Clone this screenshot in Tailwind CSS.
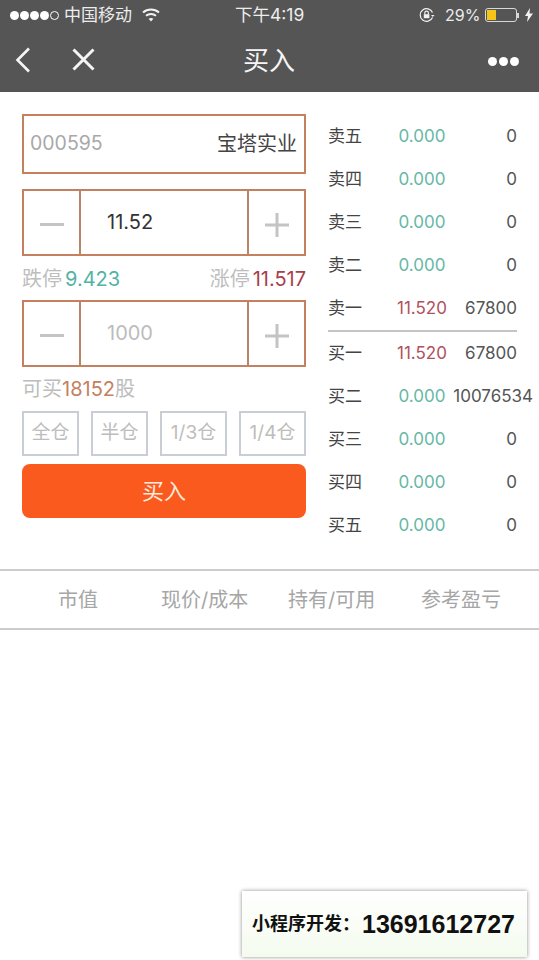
<!DOCTYPE html>
<html lang="zh-CN">
  <head>
    <meta charset="UTF-8" />
    <meta name="viewport" content="width=device-width, initial-scale=1.0" />
    <script src="https://cdn.jsdelivr.net/npm/@tailwindcss/browser@4"></script>
    <title>买入</title>
  </head>
  <body class="relative w-[539px] h-[960px] overflow-hidden bg-white font-['Inter','Noto_Sans_CJK_SC',sans-serif]">
    <header class="h-[92px] bg-[#555555] text-[#ececec]">
      <!-- status bar -->
      <div class="h-[30px] relative flex items-center pl-[10px] text-[17px] leading-none whitespace-nowrap">
        <div class="flex items-center gap-[1px]">
          <span class="w-[9px] h-[9px] rounded-full bg-white"></span>
          <span class="w-[9px] h-[9px] rounded-full bg-white"></span>
          <span class="w-[9px] h-[9px] rounded-full bg-white"></span>
          <span class="w-[9px] h-[9px] rounded-full bg-white"></span>
          <span class="w-[9px] h-[9px] rounded-full border border-white"></span>
        </div>
        <span class="ml-[5px] w-[68px]">中国移动</span>
        <svg class="ml-[10px] shrink-0" width="18" height="14" viewBox="0 0 18 14" fill="none" stroke="#f2f2f2" stroke-width="2">
          <path d="M1 4.500C5.500 .5 12.500 .5 17 4.500" />
          <path d="M4 7.800C6.800 5.400 11.200 5.400 14 7.800" />
          <path d="M9 13.500L6.600 10.800C8 9.800 10 9.800 11.400 10.800Z" fill="#f2f2f2" stroke="none" />
        </svg>
        <span class="ml-[75px] w-[71px] text-[17.500px]">下午4:19</span>
        <svg class="ml-[113px] shrink-0" width="16" height="16" viewBox="0 0 16 16" fill="none" stroke="#f2f2f2" stroke-width="1.200">
          <path d="M13.500 10.500A6.400 6.400 0 1 1 13.500 5.500" />
          <path d="M12 8h3.600l-1.800 2z" fill="#f2f2f2" stroke="none" />
          <rect x="4.800" y="7.200" width="5.600" height="4" fill="#f2f2f2" stroke="none" />
          <path d="M5.800 7.200V6a1.800 1.800 0 0 1 3.600 0v1.200" />
        </svg>
        <span class="ml-[10px] w-[34px] text-[16px]">29%</span>
        <div class="ml-[6px] w-[32px] h-[14px] border border-[#d8d8d8] rounded-[3px] p-[1px] shrink-0">
          <div class="w-[9px] h-full bg-[#f5c518]"></div>
        </div>
        <span class="w-[2px] h-[5px] bg-[#d8d8d8] shrink-0"></span>
        <svg class="ml-[6px] shrink-0" width="8" height="14" viewBox="0 0 8 14"><path d="M5 0L0 8h3l-1 6 6-8.500H4.500z" fill="#f2f2f2" /></svg>
      </div>
      <!-- nav bar -->
      <nav class="h-[62px] relative flex items-center justify-center">
        <svg class="absolute left-[15px] top-[17px]" width="16" height="26" viewBox="0 0 16 26" fill="none" stroke="#f5f5f5" stroke-width="2.600">
          <path d="M14 1.500L2.500 13 14 24.500" />
        </svg>
        <svg class="absolute left-[72px] top-[18px]" width="23" height="23" viewBox="0 0 23 23" fill="none" stroke="#f5f5f5" stroke-width="3">
          <path d="M1.500 1.500l20 20M21.500 1.500l-20 20" />
        </svg>
        <h1 class="text-[26px] leading-none text-[#f5f5f5] -mt-[1px] -ml-[1px]">买入</h1>
        <div class="absolute right-[20px] top-[27px] flex gap-[2px]">
          <span class="w-[9px] h-[9px] rounded-full bg-white"></span>
          <span class="w-[9px] h-[9px] rounded-full bg-white"></span>
          <span class="w-[9px] h-[9px] rounded-full bg-white"></span>
        </div>
      </nav>
    </header>

    <main class="flex h-[477px] pl-[22px]">
      <section class="w-[284px] pt-[22px] shrink-0">
        <div class="h-[60px] border-2 border-[#c5805f] flex items-center justify-between pl-[6px] pr-[7px] text-[20px]">
          <span class="text-[#a8a8a8] text-[19.500px]">000595</span>
          <span class="text-[#444444]">宝塔实业</span>
        </div>

        <div class="mt-[15px] h-[67px] border-2 border-[#c5805f] flex">
          <div class="w-[55px] flex items-center justify-center">
            <span class="w-[24px] h-[3px] bg-[#c4c4c4] mt-[3px]"></span>
          </div>
          <div class="flex-1 border-x-2 border-[#b98468] pl-[26px] pt-[17px] text-[20px] leading-[28px] text-[#333333]">11.52</div>
          <div class="w-[55px] flex items-center justify-center">
            <svg class="mt-[5px]" width="24" height="24" viewBox="0 0 24 24" fill="#c4c4c4"><path d="M10.500 0h3v10.500H24v3H13.500V24h-3V13.500H0v-3h10.500z" /></svg>
          </div>
        </div>

        <div class="h-[44px] flex items-center justify-between text-[20px] text-[#bdbdbd] pt-[1px] whitespace-nowrap">
          <span>跌停<span class="ml-[3px] text-[#4fb3a5]">9.423</span></span>
          <span>涨停<span class="ml-[3px] text-[#a83f4c]">11.517</span></span>
        </div>

        <div class="h-[67px] border-2 border-[#c5805f] flex">
          <div class="w-[55px] flex items-center justify-center">
            <span class="w-[24px] h-[3px] bg-[#c4c4c4] mt-[3px]"></span>
          </div>
          <div class="flex-1 border-x-2 border-[#b98468] pl-[26px] pt-[17px] text-[20px] leading-[28px] text-[#bcbcbc]">1000</div>
          <div class="w-[55px] flex items-center justify-center">
            <svg class="mt-[5px]" width="24" height="24" viewBox="0 0 24 24" fill="#c4c4c4"><path d="M10.500 0h3v10.500H24v3H13.500V24h-3V13.500H0v-3h10.500z" /></svg>
          </div>
        </div>

        <p class="h-[44px] flex items-center text-[20px] text-[#bdbdbd]">可买<span class="text-[#c5805f]">18152</span>股</p>

        <div class="flex justify-between text-[19px] text-[#bdbdbd] whitespace-nowrap">
          <button class="w-[57px] h-[45px] border-2 border-[#c9ced6]">全仓</button>
          <button class="w-[57px] h-[45px] border-2 border-[#c9ced6]">半仓</button>
          <button class="w-[67px] h-[45px] border-2 border-[#c9ced6]">1/3仓</button>
          <button class="w-[67px] h-[45px] border-2 border-[#c9ced6]">1/4仓</button>
        </div>

        <button class="mt-[8px] w-full h-[54px] rounded-[8px] bg-[#fb5a1f] text-[22px] text-[#fdeadf]">买入</button>
      </section>

      <section class="ml-[22px] w-[189px] shrink-0 pt-[23px] text-[17px] text-[#555555]">
        <div class="h-[43px] flex items-center"><span class="w-[66px] text-[#444444]">卖五</span><span class="w-[56px] text-center text-[#66b8a6]">0.000</span><span class="flex-1 text-right">0</span></div>
        <div class="h-[43px] flex items-center"><span class="w-[66px] text-[#444444]">卖四</span><span class="w-[56px] text-center text-[#66b8a6]">0.000</span><span class="flex-1 text-right">0</span></div>
        <div class="h-[43px] flex items-center"><span class="w-[66px] text-[#444444]">卖三</span><span class="w-[56px] text-center text-[#66b8a6]">0.000</span><span class="flex-1 text-right">0</span></div>
        <div class="h-[43px] flex items-center"><span class="w-[66px] text-[#444444]">卖二</span><span class="w-[56px] text-center text-[#66b8a6]">0.000</span><span class="flex-1 text-right">0</span></div>
        <div class="h-[43px] flex items-center"><span class="w-[66px] text-[#444444]">卖一</span><span class="w-[56px] text-center text-[#b0505c]">11.520</span><span class="flex-1 text-right">67800</span></div>
        <div class="h-[2px] bg-[#c4c4c4]"></div>
        <div class="h-[43px] flex items-center"><span class="w-[66px] text-[#444444]">买一</span><span class="w-[56px] text-center text-[#b0505c]">11.520</span><span class="flex-1 text-right">67800</span></div>
        <div class="h-[43px] flex items-center"><span class="w-[66px] text-[#444444]">买二</span><span class="w-[56px] text-center text-[#66b8a6]">0.000</span><span class="flex-1 text-right whitespace-nowrap -mr-[16px]">10076534</span></div>
        <div class="h-[43px] flex items-center"><span class="w-[66px] text-[#444444]">买三</span><span class="w-[56px] text-center text-[#66b8a6]">0.000</span><span class="flex-1 text-right">0</span></div>
        <div class="h-[43px] flex items-center"><span class="w-[66px] text-[#444444]">买四</span><span class="w-[56px] text-center text-[#66b8a6]">0.000</span><span class="flex-1 text-right">0</span></div>
        <div class="h-[43px] flex items-center"><span class="w-[66px] text-[#444444]">买五</span><span class="w-[56px] text-center text-[#66b8a6]">0.000</span><span class="flex-1 text-right">0</span></div>
      </section>
    </main>

    <div class="h-[61px] border-y-2 border-[#cccccc] flex items-center text-[20px] text-[#a6a6a6] whitespace-nowrap">
      <span class="w-[161px] pl-[58px]">市值</span>
      <span class="w-[127px]">现价/成本</span>
      <span class="w-[133px]">持有/可用</span>
      <span>参考盈亏</span>
    </div>

    <!-- watermark over the page -->
    <div class="absolute left-[242px] top-[891px] w-[285px] h-[66px] flex items-center pl-[10px] gap-[2px] bg-gradient-to-b from-white to-[#f4fbee] shadow-[0_0_4px_rgba(0,0,0,0.45)] text-[#111111] font-bold whitespace-nowrap">
      <span class="text-[18px] leading-none">小程序开发：</span>
      <span class="text-[25px] leading-none font-['Liberation_Sans']">13691612727</span>
    </div>
  </body>
</html>
